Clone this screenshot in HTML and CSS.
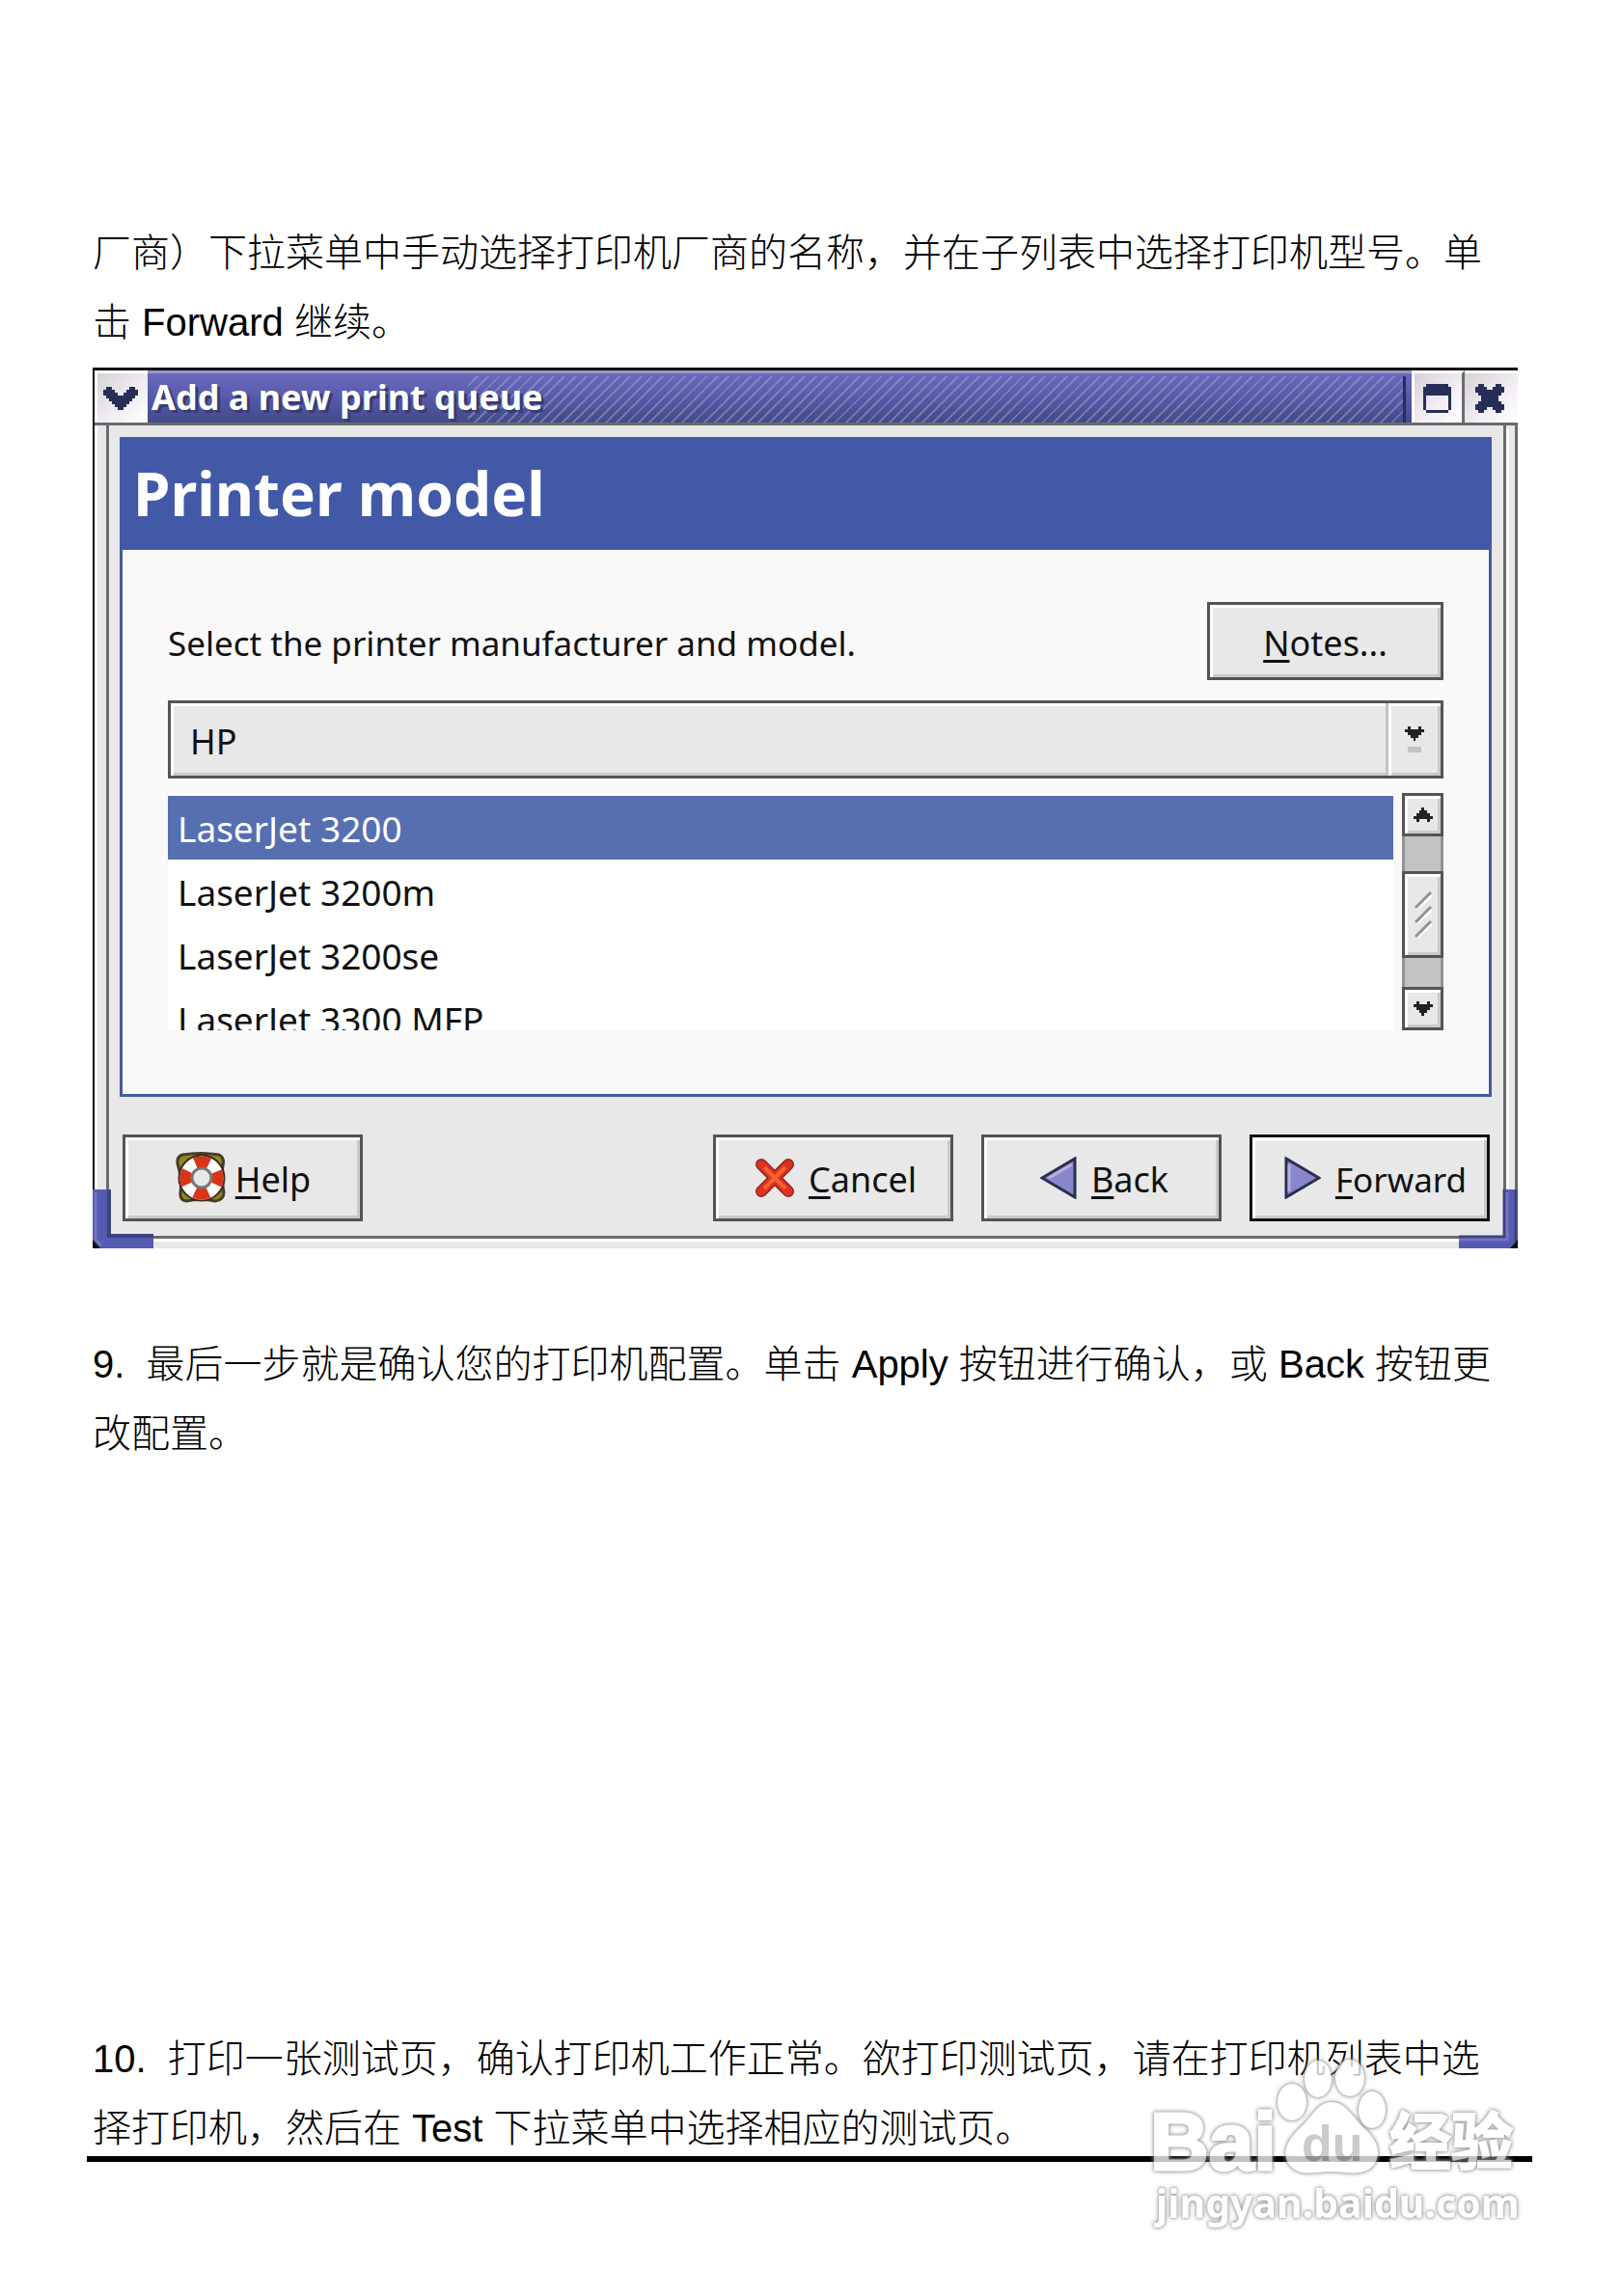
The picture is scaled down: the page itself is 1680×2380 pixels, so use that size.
FILE: index.html
```html
<!DOCTYPE html>
<html lang="zh-CN">
<head>
    <meta charset="UTF-8">
    <meta name="viewport" content="width=device-width, initial-scale=1.0">
    <title>Add a new print queue</title>
    <link rel="stylesheet" href="styles.css">
</head>
<body>
    <main class="page">
        <p>厂商）下拉菜单中手动选择打印机厂商的名称，并在子列表中选择打印机型号。单击 Forward 继续。</p>

        <section class="window">
            <header class="titlebar">
                <button class="title-btn menu" aria-label="Menu">
                    <svg width="36" height="24" viewBox="0 0 36 24"><path d="M3 0h6v3h3v3h3v3h6V6h3V3h3V0h6v3h3v6h-3v3h-3v3h-3v3h-3v3h-3v3h-6v-3h-3v-3H9v-3H6v-3H3V9H0V3h3z" fill="#262e58"/></svg>
                </button>
                <h2>Add a new print queue</h2>
                <div class="hatch"></div>
                <button class="title-btn max" aria-label="Maximize">
                    <svg width="29" height="30" viewBox="0 0 29 30"><path d="M3 0h23v3h3v24h-3v3H3v-3H0V3h3zM3 12v15h23V12z" fill="#262e58" fill-rule="evenodd"/></svg>
                </button>
                <button class="title-btn close" aria-label="Close">
                    <svg width="30" height="30" viewBox="0 0 30 30"><path d="M3 0h6v3h3v3h6V3h3V0h6v3h3v6h-3v3h-3v6h3v3h3v6h-3v3h-6v-3h-3v-3h-6v3H9v3H3v-3H0v-6h3v-3h3v-6H3V9H0V3h3z" fill="#262e58"/></svg>
                </button>
            </header>
            <div class="frame">
                <div class="content">
                    <div class="panel">
                        <h1>Printer model</h1>
                        <div class="form">
                            <div class="form-head">
                                <label for="models">Select the printer manufacturer and model.</label>
                                <button class="btn notes"><span><u>N</u>otes...</span></button>
                            </div>
                            <div class="combo">
                                <select aria-label="Manufacturer">
                                    <option>HP</option>
                                </select>
                                <span class="combo-arrow">
                                    <svg width="20" height="27" viewBox="0 0 20 27"><path d="M3 0h3v3h8V0h3v3h3v3h-3v3h-3v3h-3v3H9v-3H6V9H3V6H0V3h3z" fill="#222"/><path d="M3 21h14v6H3z" fill="#c3c3c3"/></svg>
                                </span>
                            </div>
                            <div class="list">
                                <select id="models" size="4">
                                    <option class="current">LaserJet 3200</option>
                                    <option>LaserJet 3200m</option>
                                    <option>LaserJet 3200se</option>
                                    <option>LaserJet 3300 MFP</option>
                                </select>
                                <div class="scrollbar">
                                    <button class="btn" aria-label="Up">
                                        <svg width="20" height="15" viewBox="0 0 20 15"><path d="M8 0h3v3h3v3h3v3h3v3h-3v3h-3v-3H6v3H3v-3H0V9h3V6h3V3h2z" fill="#222"/></svg>
                                    </button>
                                    <div class="btn thumb">
                                        <svg width="18" height="48" viewBox="0 0 18 48"><path d="M2 18L18 4M2 33L18 19M2 48L18 34" stroke="#fff" stroke-width="3"/><path d="M1 17L17 1M1 32L17 16M1 47L17 31" stroke="#929292" stroke-width="3"/></svg>
                                    </div>
                                    <button class="btn" aria-label="Down">
                                        <svg width="20" height="15" viewBox="0 0 20 15"><path d="M3 0h3v3h8V0h3v3h3v3h-3v3h-3v3h-3v3H8v-3H6V9H3V6H0V3h3z" fill="#222"/></svg>
                                    </button>
                                </div>
                            </div>
                        </div>
                    </div>
                    <footer class="actions">
                        <button class="btn help">
                            <svg width="54" height="54" viewBox="0 0 54 54">
                                <path d="M8 3Q27 0 46 3Q52 6 50 14Q48 27 51 42Q51 50 42 51Q27 48 12 51Q5 50 6 42Q8 27 3 12Q2 5 8 3z" fill="#8b8a22" stroke="#4a3b25" stroke-width="3"/>
                                <circle cx="28" cy="27" r="16" fill="none" stroke="#3c2a20" stroke-width="17"/>
                                <circle cx="28" cy="27" r="16" fill="none" stroke="#fff" stroke-width="13"/>
                                <circle cx="28" cy="27" r="16" fill="none" stroke="#d93418" stroke-width="13" stroke-dasharray="14 11.13" stroke-dashoffset="7"/>
                                <circle cx="28" cy="27" r="10" fill="#e8e8e8" stroke="#777" stroke-width="3"/>
                            </svg>
                            <span><u>H</u>elp</span>
                        </button>
                        <button class="btn cancel">
                            <svg width="40" height="40" viewBox="0 0 40 40"><path d="M6 6L34 34M34 6L6 34" stroke="#8f2420" stroke-width="12" stroke-linecap="round"/><path d="M6 6L34 34M34 6L6 34" stroke="#dc3320" stroke-width="9" stroke-linecap="round"/><path d="M9 9L31 31M31 9L9 31" stroke="#fa6032" stroke-width="4"/></svg>
                            <span><u>C</u>ancel</span>
                        </button>
                        <button class="btn back">
                            <svg width="38" height="44" viewBox="0 0 38 44"><path d="M36 2V42L2 22z" fill="#8a86cc" stroke="#2b2e4c" stroke-width="3"/><path d="M33 8L9 22" stroke="#b3b0e0" stroke-width="3"/></svg>
                            <span><u>B</u>ack</span>
                        </button>
                        <button class="btn forward">
                            <svg width="38" height="44" viewBox="0 0 38 44"><path d="M2 2V42L36 22z" fill="#8a86cc" stroke="#2b2e4c" stroke-width="3"/><path d="M5 8V36" stroke="#b3b0e0" stroke-width="3"/></svg>
                            <span><u>F</u>orward</span>
                        </button>
                    </footer>
                </div>
            </div>
            <!-- resize corners -->
            <svg class="corner left" width="63" height="61" viewBox="0 0 63 61"><path d="M0 0H17V48H63V61H6L0 55z" fill="#555bb0"/><path d="M17 0V48H63" fill="none" stroke="#3d4380" stroke-width="4"/><path d="M3 3V52L9 58" fill="none" stroke="#7274c4" stroke-width="3"/><path d="M0 52V61H8z" fill="#111"/></svg>
            <svg class="corner right" width="61" height="61" viewBox="0 0 61 61"><path d="M46 0H61V55L55 61H0V48H46z" fill="#555bb0"/><path d="M0 49H47V0" fill="none" stroke="#3d4380" stroke-width="3"/><path d="M0 52H50V3" fill="none" stroke="#7274c4" stroke-width="3"/><path d="M59 0V54" stroke="#3d4380" stroke-width="3"/><path d="M61 52V61H53z" fill="#111"/></svg>
        </section>

        <p>9.&nbsp; 最后一步就是确认您的打印机配置。单击 Apply 按钮进行确认，或 Back 按钮更改配置。</p>

        <p class="last">10.&nbsp; 打印一张测试页，确认打印机工作正常。欲打印测试页，请在打印机列表中选择打印机，然后在 Test 下拉菜单中选择相应的测试页。</p>
        <hr>

        <svg class="watermark" width="400" height="200" viewBox="0 0 400 200">
            <g fill="#fff">
                <text class="bai" x="12" y="121">Bai</text>
                <ellipse cx="159" cy="51" rx="15" ry="19"/>
                <ellipse cx="186" cy="27" rx="14" ry="19"/>
                <ellipse cx="219" cy="26" rx="15" ry="19"/>
                <ellipse cx="242" cy="59" rx="14" ry="19"/>
                <path d="M200 51C215 51 222 67 234 78C248 91 252 104 244 116C233 129 216 123 200 123C184 123 168 129 157 117C148 105 153 91 167 78C180 67 185 51 200 51z"/>
                <text class="cn" x="260" y="115">经验</text>
                <text class="url" x="18" y="171">jingyan.baidu.com</text>
            </g>
            <text class="du" x="169" y="112">du</text>
        </svg>
    </main>
</body>
</html>
```
FILE: styles.css
```css
* {
    box-sizing: border-box;
}

body {
    margin: 0;
    background: #fff;
    color: #000;
    font-family: "Liberation Sans", "Noto Sans CJK SC", sans-serif;
}

.page {
    position: relative;
    padding: 226px 92px 139px 90px;
}

p {
    margin: 0 32px 0 6px;
    font-size: 40px;
    line-height: 72px;
    font-weight: 300;
}

p.last {
    margin-top: 576px;
}

hr {
    height: 6px;
    margin: -7px 0 0;
    border: 0;
    background: #000;
}

button,
select {
    margin: 0;
    padding: 0;
    border: 0;
    border-radius: 0;
    color: #111;
    font: inherit;
}

svg {
    display: block;
    flex: none;
}

/* window */
.window {
    position: relative;
    margin: 11px 15px 84px 6px;
    border: solid #111;
    border-width: 3px 0 0 2px;
    font-family: "Noto Sans", sans-serif;
    font-size: 36px;
    color: #111;
}

.titlebar {
    display: flex;
    height: 57px;
    border-top: 3px solid #9c94c8;
    border-bottom: 3px solid #6b6b6e;
    background: linear-gradient(#6b6bbf, #5759a8 50%, #424a87);
}

.titlebar h2 {
    margin: 0;
    padding-left: 4px;
    font-size: 36px;
    line-height: 50px;
    color: #fff;
    text-shadow: 3px 3px 0 #363c70;
}

.hatch {
    flex: 1;
    margin: 3px 0 0 -78px;
    border-right: 3px solid #262e58;
    background: repeating-linear-gradient(135deg, transparent 0 6px, rgba(170, 170, 200, .45) 6px 8px);
}

.titlebar h2,
.title-btn {
    position: relative;
    z-index: 1;
}

.title-btn {
    display: flex;
    align-items: center;
    justify-content: center;
    margin-top: -3px;
    border-top: 3px solid #fff;
    background: linear-gradient(135deg, #d6d2d6, #f3eff5 60%, #fff);
}

.title-btn.menu {
    width: 55px;
    padding-right: 4px;
    border-left: 3px solid #fff;
}

.title-btn.max {
    width: 55px;
    margin-left: 6px;
    padding-right: 3px;
    border-left: 3px solid #fff;
    border-right: 3px solid #6b6b6e;
}

.title-btn.close {
    width: 55px;
    padding-right: 3px;
}

.frame {
    padding: 0 9px 10px;
    border-left: 3px solid #fff;
    border-right: 3px solid #6b6b6e;
    background: #e8e8e8;
}

.content {
    padding: 12px 12px 15px 11px;
    border: solid #6b6b6e;
    border-width: 0 3px 3px;
    box-shadow: 3px 3px 0 #fff;
}

.panel {
    border: 3px solid #455a9b;
    border-top: 0;
    background: #f9f9f9;
}

.panel h1 {
    margin: 0 -3px;
    padding-left: 14px;
    background: #4259a8;
    color: #fff;
    font-size: 62px;
    line-height: 117px;
}

.form {
    padding: 54px 47px 66px;
}

.form-head {
    display: flex;
    align-items: center;
    justify-content: space-between;
}

.form-head label {
    padding-top: 4px;
    font-size: 35px;
}

.btn {
    display: flex;
    align-items: center;
    justify-content: center;
    border: 3px solid #525552;
    background: #e8e8e8;
    box-shadow: inset 3px 3px 0 #fff, inset -3px -3px 0 #c9cbc8;
}

.btn span {
    padding-top: 3px;
}

u {
    text-decoration-thickness: 3px;
    text-underline-offset: 4px;
}

.notes {
    width: 245px;
    height: 81px;
}

.combo {
    position: relative;
    margin-top: 21px;
}

.combo select {
    display: block;
    width: 100%;
    height: 81px;
    padding: 4px 0 0 20px;
    appearance: none;
    border: 3px solid #525552;
    background: #e8e8e8;
    box-shadow: inset 3px 3px 0 #fff, inset -3px -3px 0 #c9cbc8;
}

.combo-arrow {
    position: absolute;
    top: 3px;
    right: 3px;
    bottom: 3px;
    display: flex;
    align-items: center;
    width: 57px;
    padding-left: 17px;
    border-left: 3px solid #c3c3c3;
    box-shadow: inset 3px 0 0 #fff;
    pointer-events: none;
}

.list {
    display: flex;
    gap: 9px;
    height: 246px;
    margin-top: 15px;
}

.list select {
    flex: 1;
    height: 246px;
    padding-top: 3px;
    overflow: hidden;
    scrollbar-width: none;
    background: #fff;
    font-size: 37px;
}

.list option {
    height: 66px;
    padding: 8px 0 0 10px;
}

.list .current {
    background: #566fb1;
    color: #fff;
}

.scrollbar {
    display: flex;
    flex-direction: column;
    width: 43px;
    border: solid #929292;
    border-width: 0 3px;
    background: #c3c3c3;
}

.scrollbar .btn {
    height: 45px;
    margin: 0 -3px;
}

.scrollbar .thumb {
    height: 90px;
    margin: 36px -3px 30px;
}

.actions {
    display: flex;
    gap: 29px;
    margin-top: 39px;
    padding: 0 2px 0 3px;
}

.actions .btn {
    width: 249px;
    height: 90px;
    gap: 15px;
}

.actions .help {
    gap: 9px;
    margin-right: auto;
}

.actions .cancel,
.actions .back {
    padding-left: 6px;
}

.actions .forward {
    padding-left: 12px;
    border-color: #111;
    font-size: 35px;
}

.corner {
    position: absolute;
    bottom: 0;
}

.corner.left {
    left: -2px;
}

.corner.right {
    right: 0;
}

/* site mark over the page foot */
.watermark {
    position: absolute;
    right: 100px;
    bottom: 52px;
    opacity: .76;
    overflow: visible;
    filter: drop-shadow(0 0 2px #777) drop-shadow(0 0 1px #aaa);
}

.bai {
    font: bold 84px "Liberation Sans", sans-serif;
    stroke: #fff;
    stroke-width: 3px;
}

.du {
    font: bold 52px "Liberation Sans", sans-serif;
    fill: #bbb;
}

.cn {
    font: bold 64px "Noto Sans CJK SC", sans-serif;
    stroke: #fff;
    stroke-width: 2px;
}

.url {
    font: bold 41px "Noto Sans", sans-serif;
}
```
